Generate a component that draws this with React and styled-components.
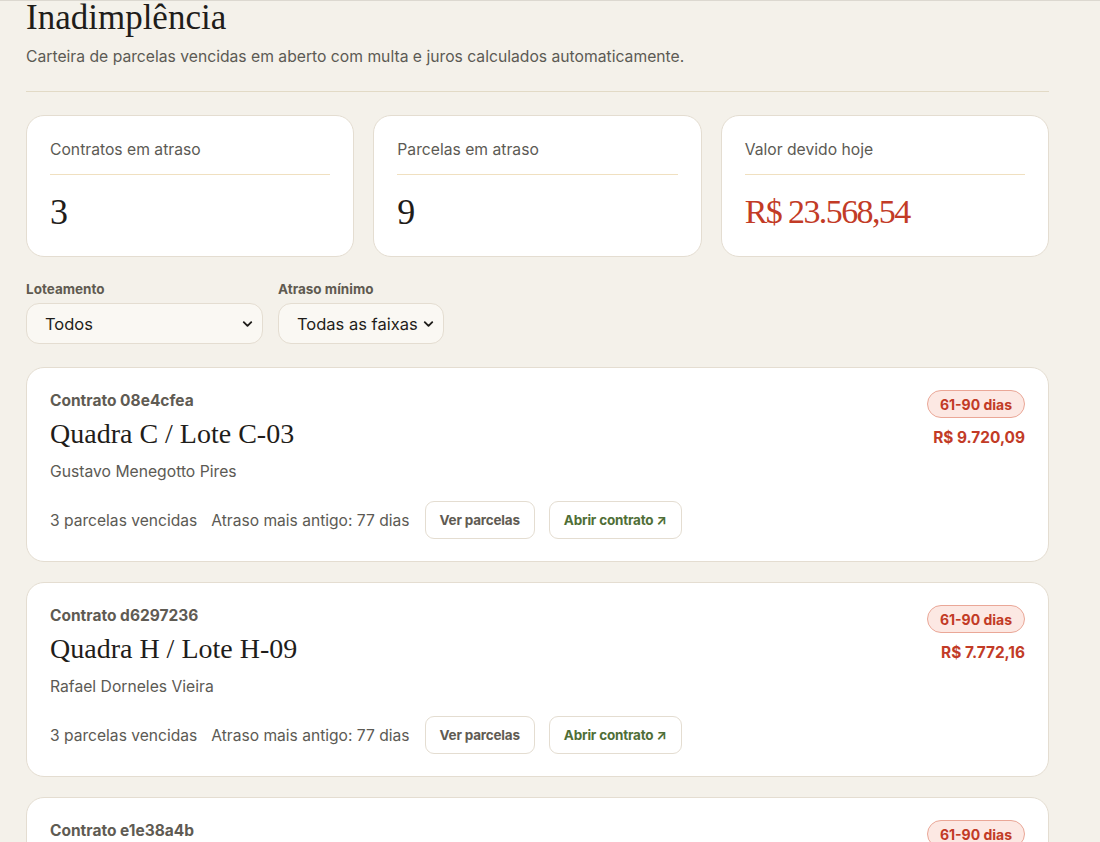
import React from "react";
import styled, { createGlobalStyle } from "styled-components";
import { ChevronDown } from "lucide-react";

const GlobalStyle = createGlobalStyle`
  html, body { margin: 0; padding: 0; background: #f4f1ea; }
  body { font-family: Inter, "Noto Sans", sans-serif; color: #2a2824; border-top: 1px solid #dcd8d0; }
  * { box-sizing: border-box; }
`;

const Page = styled.main`
  width: 1023px;
  margin-left: 26px;
  padding-bottom: 40px;
`;

const Title = styled.h1`
  margin: 0;
  font-family: "Liberation Serif", "DejaVu Serif", serif;
  font-weight: 400;
  font-size: 35px;
  line-height: 34px;
  color: #1f1d1a;
`;

const Subtitle = styled.p`
  margin: 10px 0 0;
  font-size: 15.7px;
  line-height: 24px;
  color: #5c5a54;
  padding-bottom: 22px;
  border-bottom: 1px solid #e2dac6;
`;

const Stats = styled.section`
  display: grid;
  grid-template-columns: repeat(3, 1fr);
  gap: 19px;
  margin-top: 23px;
`;

const StatCard = styled.div`
  background: #fff;
  border: 1px solid #e4ddd1;
  border-radius: 18px;
  padding: 24px 23px 21px;
`;

const StatLabel = styled.div`
  font-size: 15.7px;
  line-height: 20px;
  color: #5c5a54;
  padding-bottom: 14px;
  border-bottom: 1px solid #f0e0c0;
`;

const StatValue = styled.div`
  margin-top: 14px;
  font-family: "Liberation Serif", "DejaVu Serif", serif;
  font-size: ${(p) => (p.$danger ? "34px" : "36px")};
  line-height: 46px;
  letter-spacing: ${(p) => (p.$danger ? "-1.6px" : "0")};
  color: ${(p) => (p.$danger ? "#c23b26" : "#1f1d1a")};
`;

const Filters = styled.section`
  display: flex;
  gap: 15px;
  margin-top: 23px;
`;

const Field = styled.label`
  display: flex;
  flex-direction: column;
  gap: 5px;
  width: ${(p) => p.$width}px;
`;

const FieldLabel = styled.span`
  font-size: 13.5px;
  font-weight: 700;
  line-height: 18px;
  color: #5f5a50;
`;

const SelectWrap = styled.div`
  position: relative;
`;

const Select = styled.select`
  appearance: none;
  width: 100%;
  height: 41px;
  border: 1px solid #e4ddd1;
  border-radius: 13px;
  background: #faf8f3;
  padding: 0 22px 0 18px;
  font-family: Inter, "Noto Sans", sans-serif;
  font-size: 16.5px;
  color: #1f1d1a;
`;

const Chevron = styled(ChevronDown)`
  position: absolute;
  right: 8px;
  top: 50%;
  transform: translateY(-50%);
  pointer-events: none;
  color: #1f1d1a;
`;

const List = styled.section`
  display: flex;
  flex-direction: column;
  gap: 20px;
  margin-top: 23px;
`;

const ContractCard = styled.article`
  background: #fff;
  border: 1px solid #e4ddd1;
  border-radius: 18px;
  padding: 23px 23px 22px;
  display: flex;
  justify-content: space-between;
  align-items: flex-start;
`;

const Main = styled.div`
  display: flex;
  flex-direction: column;
`;

const ContractId = styled.div`
  font-size: 15.5px;
  font-weight: 700;
  line-height: 20px;
  color: #5f5b53;
`;

const LotTitle = styled.h2`
  margin: 6px 0 0;
  font-family: "Liberation Serif", "DejaVu Serif", serif;
  font-weight: 400;
  font-size: 28px;
  line-height: 34px;
  color: #1f1d1a;
`;

const Buyer = styled.div`
  margin-top: 10px;
  font-size: 15.7px;
  line-height: 22px;
  color: #5c5a54;
`;

const Footer = styled.div`
  margin-top: 18px;
  display: flex;
  align-items: center;
  gap: 14px;
  font-size: 15.6px;
  color: #5c5a54;
`;

const Button = styled.button`
  height: 38px;
  padding: 0 14px;
  border: 1px solid #e4ddd1;
  border-radius: 9px;
  background: #fff;
  font-family: Inter, "Noto Sans", sans-serif;
  font-size: 13.5px;
  font-weight: 700;
  letter-spacing: -0.2px;
  color: ${(p) => (p.$accent ? "#4f6e36" : "#5f5b53")};
  margin-left: ${(p) => (p.$first ? "1px" : "0")};
`;

const Side = styled.div`
  display: flex;
  flex-direction: column;
  align-items: flex-end;
  gap: 10px;
  margin-top: -1px;
`;

const Badge = styled.span`
  height: 28px;
  display: inline-flex;
  align-items: center;
  padding: 0 12px;
  border-radius: 14px;
  border: 1px solid #eaa797;
  background: #fce8e3;
  color: #c23b26;
  font-size: 14px;
  font-weight: 700;
`;

const Amount = styled.div`
  font-size: 15.4px;
  font-weight: 700;
  line-height: 20px;
  color: #c23b26;
`;

const contracts = [
  { id: "08e4cfea", lot: "Quadra C / Lote C-03", buyer: "Gustavo Menegotto Pires", amount: "R$ 9.720,09", count: 3, days: 77 },
  { id: "d6297236", lot: "Quadra H / Lote H-09", buyer: "Rafael Dorneles Vieira", amount: "R$ 7.772,16", count: 3, days: 77 },
  { id: "e1e38a4b", lot: "Quadra A / Lote A-12", buyer: "Mariana Schultz Lopes", amount: "R$ 6.076,29", count: 3, days: 77 },
];

export default function App() {
  return (
    <>
      <GlobalStyle />
      <Page>
        <Title>Inadimplência</Title>
        <Subtitle>Carteira de parcelas vencidas em aberto com multa e juros calculados automaticamente.</Subtitle>

        <Stats>
          <StatCard>
            <StatLabel>Contratos em atraso</StatLabel>
            <StatValue>3</StatValue>
          </StatCard>
          <StatCard>
            <StatLabel>Parcelas em atraso</StatLabel>
            <StatValue>9</StatValue>
          </StatCard>
          <StatCard>
            <StatLabel>Valor devido hoje</StatLabel>
            <StatValue $danger>R$ 23.568,54</StatValue>
          </StatCard>
        </Stats>

        <Filters>
          <Field $width={237}>
            <FieldLabel>Loteamento</FieldLabel>
            <SelectWrap>
              <Select defaultValue="todos">
                <option value="todos">Todos</option>
              </Select>
              <Chevron size={15} strokeWidth={3} />
            </SelectWrap>
          </Field>
          <Field $width={166}>
            <FieldLabel>Atraso mínimo</FieldLabel>
            <SelectWrap>
              <Select defaultValue="todas">
                <option value="todas">Todas as faixas</option>
              </Select>
              <Chevron size={15} strokeWidth={3} />
            </SelectWrap>
          </Field>
        </Filters>

        <List>
          {contracts.map((c) => (
            <ContractCard key={c.id}>
              <Main>
                <ContractId>Contrato {c.id}</ContractId>
                <LotTitle>{c.lot}</LotTitle>
                <Buyer>{c.buyer}</Buyer>
                <Footer>
                  <span>{c.count} parcelas vencidas</span>
                  <span>Atraso mais antigo: {c.days} dias</span>
                  <Button $first>Ver parcelas</Button>
                  <Button $accent>Abrir contrato ↗</Button>
                </Footer>
              </Main>
              <Side>
                <Badge>61-90 dias</Badge>
                <Amount>{c.amount}</Amount>
              </Side>
            </ContractCard>
          ))}
        </List>
      </Page>
    </>
  );
}
